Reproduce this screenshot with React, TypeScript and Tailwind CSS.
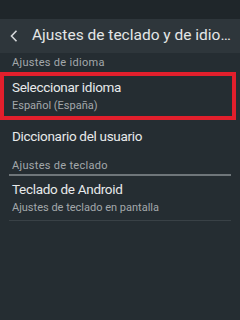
import React from "react";

export default function App() {
  return (
    <div
      className="w-[240px] h-[320px] bg-[#252d32] overflow-hidden flex flex-col"
      style={{ fontFamily: "Roboto, 'Noto Sans', sans-serif" }}
    >
      <div className="h-[19px] bg-[#1f262a] shrink-0" />
      <div className="h-[34px] bg-[#2e363b] shrink-0 flex items-center">
        <svg width="8" height="12" viewBox="0 0 8 12" className="ml-[10px] shrink-0">
          <path d="M6.5 0.8 L1.5 6 L6.5 11.2" stroke="#d4d7d9" strokeWidth="1.6" fill="none" />
        </svg>
        <div className="ml-[14px] text-[15.5px] text-[#e4e6e7] whitespace-nowrap leading-none">
          Ajustes de teclado y de idio…
        </div>
      </div>
      <div className="h-[19px] flex items-center pl-[12px] text-[11px] tracking-[0.3px] text-[#a3a8ab] leading-none">
        Ajustes de idioma
      </div>
      <div className="w-[236px] h-[48px] border-4 border-[#e21f2c] flex flex-col justify-center pl-[8px]">
        <div className="text-[13.5px] tracking-[-0.3px] text-[#e8eaeb] leading-none">Seleccionar idioma</div>
        <div className="text-[11px] text-[#a3a8ab] leading-none mt-[5px]">Español (España)</div>
      </div>
      <div className="h-[34px] flex items-center pl-[12px] text-[13.5px] tracking-[-0.3px] text-[#e8eaeb] leading-none">
        Diccionario del usuario
      </div>
      <div className="h-[20px] flex items-end pb-[3px] pl-[12px] text-[11px] tracking-[0.3px] text-[#a3a8ab] leading-none">
        Ajustes de teclado
      </div>
      <div className="mx-[9px] h-[2px] bg-[#6f767a]" />
      <div className="h-[44px] flex flex-col justify-center pl-[12px]">
        <div className="text-[13.5px] tracking-[-0.3px] text-[#e8eaeb] leading-none">Teclado de Android</div>
        <div className="text-[11px] text-[#a3a8ab] leading-none mt-[5px]">Ajustes de teclado en pantalla</div>
      </div>
      <div className="mx-[9px] h-px bg-[#394146]" />
    </div>
  );
}
